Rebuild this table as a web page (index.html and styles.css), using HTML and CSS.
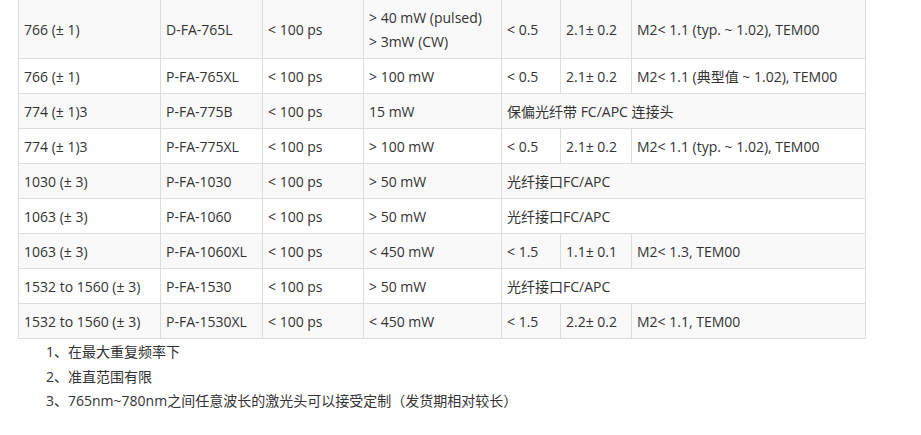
FILE: index.html
```html
<!DOCTYPE html>
<html lang="zh-CN">
<head>
<meta charset="utf-8">
<link rel="stylesheet" href="styles.css">
</head>
<body>
<div class="page">
<table class="spec">
<colgroup>
<col class="c1"><col class="c2"><col class="c3"><col class="c4"><col class="c5"><col class="c6"><col class="c7">
</colgroup>
<tbody>
<tr class="odd"><td>766 (± 1)</td><td>D-FA-765L</td><td>&lt; 100 ps</td><td>&gt; 40 mW (pulsed)<br>&gt; 3mW (CW)</td><td>&lt; 0.5</td><td>2.1± 0.2</td><td>M2&lt; 1.1 (typ. ~ 1.02), TEM00</td></tr>
<tr><td>766 (± 1)</td><td>P-FA-765XL</td><td>&lt; 100 ps</td><td>&gt; 100 mW</td><td>&lt; 0.5</td><td>2.1± 0.2</td><td>M2&lt; 1.1 (典型值 ~ 1.02), TEM00</td></tr>
<tr class="odd"><td>774 (± 1)3</td><td>P-FA-775B</td><td>&lt; 100 ps</td><td>15 mW</td><td colspan="3">保偏光纤带 FC/APC 连接头</td></tr>
<tr><td>774 (± 1)3</td><td>P-FA-775XL</td><td>&lt; 100 ps</td><td>&gt; 100 mW</td><td>&lt; 0.5</td><td>2.1± 0.2</td><td>M2&lt; 1.1 (typ. ~ 1.02), TEM00</td></tr>
<tr class="odd"><td>1030 (± 3)</td><td>P-FA-1030</td><td>&lt; 100 ps</td><td>&gt; 50 mW</td><td colspan="3">光纤接口FC/APC</td></tr>
<tr><td>1063 (± 3)</td><td>P-FA-1060</td><td>&lt; 100 ps</td><td>&gt; 50 mW</td><td colspan="3">光纤接口FC/APC</td></tr>
<tr class="odd"><td>1063 (± 3)</td><td>P-FA-1060XL</td><td>&lt; 100 ps</td><td>&lt; 450 mW</td><td>&lt; 1.5</td><td>1.1± 0.1</td><td>M2&lt; 1.3, TEM00</td></tr>
<tr><td>1532 to 1560 (± 3)</td><td>P-FA-1530</td><td>&lt; 100 ps</td><td>&gt; 50 mW</td><td colspan="3">光纤接口FC/APC</td></tr>
<tr class="odd"><td>1532 to 1560 (± 3)</td><td>P-FA-1530XL</td><td>&lt; 100 ps</td><td>&lt; 450 mW</td><td>&lt; 1.5</td><td>2.2± 0.2</td><td>M2&lt; 1.1, TEM00</td></tr>
</tbody>
</table>
<div class="notes">
<p>1、在最大重复频率下</p>
<p>2、准直范围有限</p>
<p>3、765nm~780nm之间任意波长的激光头可以接受定制（发货期相对较长）</p>
</div>
</div>
</body>
</html>
```
FILE: styles.css
```css
html, body {
  margin: 0;
  padding: 0;
  background: #ffffff;
}
body {
  font-family: "Open Sans", "Noto Sans CJK SC", sans-serif;
  font-size: 14px;
  color: #333333;
}
.page {
  padding-left: 18px;
  margin-top: -1px;
}
.spec {
  border-collapse: collapse;
  table-layout: fixed;
  width: 848px;
}
.c1 { width: 142px; }
.c2 { width: 102px; }
.c3 { width: 101px; }
.c4 { width: 138px; }
.c5 { width: 59px; }
.c6 { width: 71px; }
.c7 { width: 234px; }
.spec td {
  border: 1px solid #dddddd;
  padding: 6px 5px 4px;
  line-height: 24px;
  vertical-align: middle;
  white-space: nowrap;
  background: #ffffff;
}
.spec tr.odd td {
  background: #f9f9f9;
}
.notes {
  padding-top: 1px;
  padding-left: 28px;
}
.notes p {
  margin: 0;
  line-height: 24.5px;
}
```
